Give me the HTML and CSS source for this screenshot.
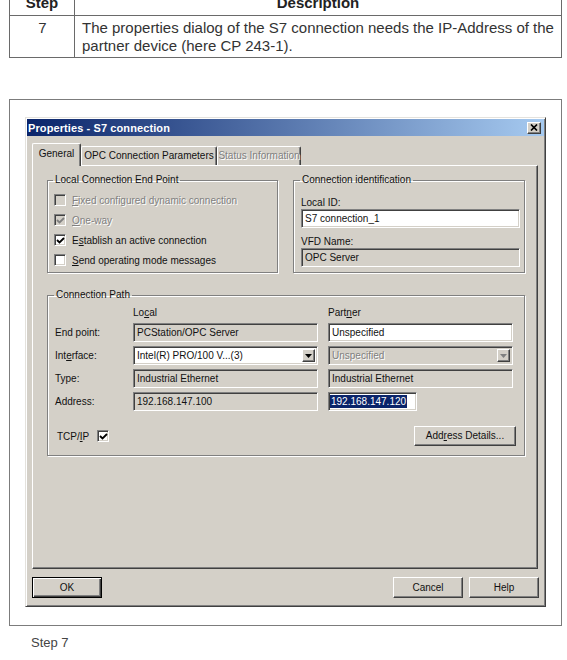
FILE: index.html
```html
<!DOCTYPE html>
<html>
<head>
<meta charset="utf-8">
<title>Step 7</title>
<link rel="stylesheet" href="styles.css">
</head>
<body>
<table class="steps">
  <tr><th class="c-step">Step</th><th>Description</th></tr>
  <tr><td class="c-step">7</td><td>The properties dialog of the S7 connection needs the IP-Address of the partner device (here CP 243-1).</td></tr>
</table>

<div class="figure">
  <div class="dialog">
    <div class="titlebar">
      <span class="title">Properties - S7 connection</span>
      <span class="close"><svg width="8" height="7" viewBox="0 0 8 7"><path d="M1 0.5 L7 6.5 M7 0.5 L1 6.5" stroke="#000" stroke-width="1.7" fill="none"/></svg></span>
    </div>
    <div class="dlg-body">
      <div class="tabs">
        <div class="tab active w-gen">General</div>
        <div class="tab w-opc">OPC Connection Parameters</div>
        <div class="tab disabled w-stat">Status Information</div>
      </div>
      <div class="panel">
        <div class="top-groups">
          <fieldset class="group local">
            <legend>Local Connection End Point</legend>
            <div class="check disabled"><span class="box"></span><span class="lbl"><u>F</u>ixed configured dynamic connection</span></div>
            <div class="check disabled"><span class="box checked"><svg width="9" height="9" viewBox="0 0 9 9"><path d="M1 4 L3.5 6.5 L8 2" stroke="#808080" stroke-width="1.8" fill="none"/></svg></span><span class="lbl"><u>O</u>ne-way</span></div>
            <div class="check"><span class="box checked"><svg width="9" height="9" viewBox="0 0 9 9"><path d="M1 4 L3.5 6.5 L8 2" stroke="#000" stroke-width="1.8" fill="none"/></svg></span><span class="lbl">E<u>s</u>tablish an active connection</span></div>
            <div class="check"><span class="box"></span><span class="lbl"><u>S</u>end operating mode messages</span></div>
          </fieldset>
          <fieldset class="group ident">
            <legend>Connection identification</legend>
            <div class="flabel">Local ID:</div>
            <div class="field">S7 connection_1</div>
            <div class="flabel second">VFD Name:</div>
            <div class="field ro">OPC Server</div>
          </fieldset>
        </div>
        <fieldset class="group path">
          <legend>Connection Path</legend>
          <div class="path-grid">
            <span></span>
            <span class="colhead">Lo<u>c</u>al</span>
            <span class="colhead">Part<u>n</u>er</span>

            <span class="rlabel">End point:</span>
            <div class="field ro">PCStation/OPC Server</div>
            <div class="field">Unspecified</div>

            <span class="rlabel">Int<u>e</u>rface:</span>
            <div class="field select"><span class="sel-text">Intel(R) PRO/100 V...(3)</span><span class="dd"><svg width="7" height="4" viewBox="0 0 7 4"><polygon points="0,0 7,0 3.5,4" fill="#000"/></svg></span></div>
            <div class="field select ro disabled-text"><span class="sel-text">Unspecified</span><span class="dd"><svg width="7" height="4" viewBox="0 0 7 4"><polygon points="0,0 7,0 3.5,4" fill="#808080"/></svg></span></div>

            <span class="rlabel">Type:</span>
            <div class="field ro">Industrial Ethernet</div>
            <div class="field ro">Industrial Ethernet</div>

            <span class="rlabel">Address:</span>
            <div class="field ro">192.168.147.100</div>
            <div class="field addr"><span class="selected">192.168.147.120</span></div>
          </div>
          <div class="tcp-row">
            <div class="tcp"><span class="tcp-lbl">TCP/<u>I</u>P</span><span class="box checked"><svg width="9" height="9" viewBox="0 0 9 9"><path d="M1 4 L3.5 6.5 L8 2" stroke="#000" stroke-width="1.8" fill="none"/></svg></span></div>
            <div class="btn details">Add<u>r</u>ess Details...</div>
          </div>
        </fieldset>
      </div>
      <div class="buttons">
        <div class="btn default">OK</div>
        <div class="btn push-right">Cancel</div>
        <div class="btn">Help</div>
      </div>
    </div>
  </div>
</div>

<p class="caption">Step 7</p>
</body>
</html>
```

FILE: styles.css
```css
* { box-sizing: border-box; }

body {
  margin: 0;
  background: #fff;
  font-family: "Liberation Sans", Arial, sans-serif;
}

/* ---------- step table ---------- */
.steps {
  border-collapse: collapse;
  margin: -10px 0 0 9px;
  width: 553px;
  font-size: 15px;
  line-height: 18px;
  color: #333;
}
.steps th, .steps td { border: 1px solid #6a6a6a; }
.steps th { padding: 3px 6px; font-weight: bold; color: #222; }
.steps td { padding: 3px 6px 2px 7px; vertical-align: top; text-align: left; }
.steps .c-step { width: 65px; text-align: center; }

/* ---------- figure frame ---------- */
.figure {
  margin: 41px 0 0 9px;
  width: 553px;
  height: 527px;
  border: 1px solid #7c7c7c;
  padding: 17px 0 0 15px;
}

.caption {
  margin: 9px 0 0 31px;
  font-size: 13px;
  line-height: 16px;
  color: #444;
}

/* ---------- dialog ---------- */
.dialog {
  width: 521px;
  height: 490px;
  background: #d4d0c8;
  border: 1px solid;
  border-color: #e4e2dd #404040 #404040 #e4e2dd;
  padding: 1px;
  box-shadow: inset 1px 1px 0 #fff, inset -1px -1px 0 #808080;
  display: flex;
  flex-direction: column;
  font-size: 10px;
  color: #111;
}

.titlebar {
  height: 17px;
  flex: none;
  background: linear-gradient(to right, #0a246a, #a6caf0);
  display: flex;
  align-items: center;
  justify-content: space-between;
  padding: 0 3px 0 1px;
}
.title {
  color: #fff;
  font-weight: bold;
  font-size: 11px;
  letter-spacing: 0.1px;
}
.close {
  width: 14px;
  height: 12px;
  background: #d4d0c8;
  border: 1px solid;
  border-color: #fff #404040 #404040 #fff;
  box-shadow: inset -1px -1px 0 #808080;
  display: flex;
  align-items: center;
  justify-content: center;
}

.dlg-body {
  flex: 1;
  display: flex;
  flex-direction: column;
  padding: 7px 6px 0 5px;
}

/* ---------- tabs ---------- */
.tabs {
  display: flex;
  align-items: flex-end;
  height: 22px;
  flex: none;
}
.tab {
  height: 19px;
  line-height: 17px;
  text-align: center;
  white-space: nowrap;
  border-top: 1px solid #fff;
  border-left: 1px solid #fff;
  border-right: 1px solid #404040;
  box-shadow: inset -1px 0 0 #808080;
  border-radius: 2px 2px 0 0;
  background: #d4d0c8;
}
.tab.active {
  position: relative;
  height: 23px;
  margin-bottom: -1px;
  line-height: 20px;
  padding-bottom: 2px;
}
.tab.disabled { color: #808080; text-shadow: 1px 1px 0 #fff; }
.w-gen { width: 49px; }
.w-opc { width: 136px; }
.w-stat { width: 84px; }

.panel {
  height: 404px;
  flex: none;
  border: 1px solid;
  border-color: #fff #404040 #404040 #fff;
  box-shadow: inset -1px -1px 0 #808080;
  padding: 8px 12px 0 14px;
}

/* ---------- group boxes ---------- */
.top-groups {
  display: grid;
  grid-template-columns: 231px 232px;
  column-gap: 15px;
}
.group {
  margin: 0;
  min-width: 0;
  border: 1px solid #808080;
  box-shadow: 1px 1px 0 #fff, inset 1px 1px 0 #fff;
}
.group legend {
  padding: 0 2px;
  margin-left: -1px;
  line-height: 12px;
  font-size: 10px;
}
.local { padding: 4px 6px 2px 6px; }
.ident { padding: 9px 4px 5px 7px; }
.path { margin-top: 16px; padding: 6px 10px 9px 7px; }

.check {
  height: 20px;
  display: flex;
  align-items: center;
  gap: 6px;
}
.check.disabled .lbl { color: #808080; text-shadow: 1px 1px 0 #fff; }

.box {
  width: 12px;
  height: 12px;
  flex: none;
  border: 1px solid;
  border-color: #808080 #fff #fff #808080;
  box-shadow: inset 1px 1px 0 #404040, inset -1px -1px 0 #d4d0c8;
  background: #fff;
  display: flex;
  align-items: center;
  justify-content: center;
}
.check.disabled .box { background: #d4d0c8; }

.flabel { line-height: 12px; margin-top: 2px; }
.flabel.second { margin-top: 8px; }

.field {
  height: 19px;
  border: 1px solid;
  border-color: #808080 #fff #fff #808080;
  box-shadow: inset 1px 1px 0 #404040, inset -1px -1px 0 #d4d0c8;
  background: #fff;
  padding: 0 3px;
  line-height: 17px;
  white-space: nowrap;
  overflow: hidden;
}
.field.ro { background: #d4d0c8; }
.disabled-text .sel-text { color: #808080; text-shadow: 1px 1px 0 #fff; }

.field.select {
  display: flex;
  align-items: center;
  justify-content: space-between;
  padding: 0 2px 0 3px;
}
.dd {
  width: 13px;
  height: 13px;
  background: #d4d0c8;
  border: 1px solid;
  border-color: #fff #404040 #404040 #fff;
  box-shadow: inset -1px -1px 0 #808080;
  display: flex;
  align-items: center;
  justify-content: center;
}

.path-grid {
  display: grid;
  grid-template-columns: 68px 185px 185px;
  column-gap: 10px;
  row-gap: 4px;
  align-items: center;
}
.colhead { line-height: 12px; }
.field.addr { width: 89px; padding-left: 1px; }
.selected { background: #0a246a; color: #fff; padding: 1px 1px; }

.tcp-row {
  margin-top: 15px;
  margin-right: -2px;
  display: flex;
  align-items: center;
  justify-content: space-between;
  padding-left: 2px;
}
.tcp { display: flex; align-items: center; gap: 8px; }

/* ---------- buttons ---------- */
.btn {
  height: 21px;
  width: 70px;
  line-height: 19px;
  text-align: center;
  background: #d4d0c8;
  border: 1px solid;
  border-color: #fff #404040 #404040 #fff;
  box-shadow: inset -1px -1px 0 #808080;
}
.btn.details { width: 102px; height: 20px; line-height: 18px; }
.btn.default {
  border-color: #000;
  box-shadow: inset 1px 1px 0 #fff, inset -1px -1px 0 #404040, inset -2px -2px 0 #808080;
}
.buttons {
  display: flex;
  gap: 6px;
  margin-top: 8px;
  margin-right: -1px;
}
.push-right { margin-left: auto; }
```
